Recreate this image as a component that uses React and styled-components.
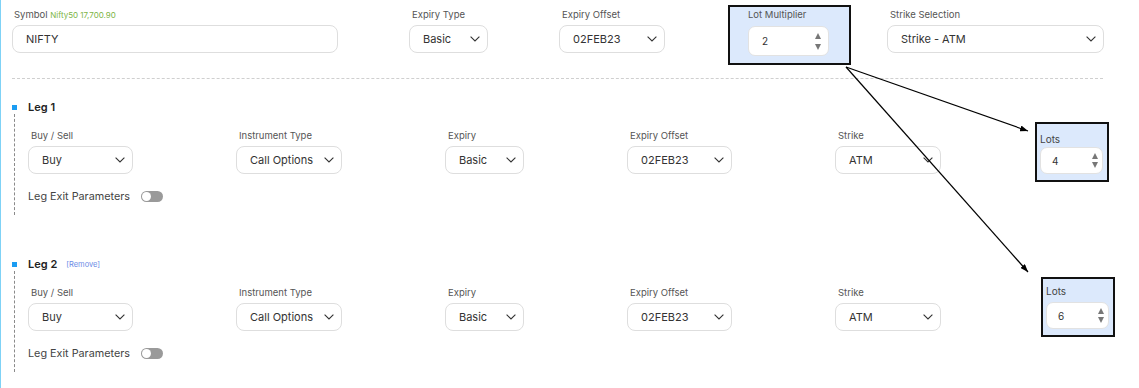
import React from "react";
import styled, { createGlobalStyle } from "styled-components";

const GlobalStyle = createGlobalStyle`
  * { box-sizing: border-box; }
  html, body { margin: 0; padding: 0; background: #ffffff; }
  body { font-family: Inter, "Liberation Sans", Arial, sans-serif; color: #333; }
`;

const Page = styled.div`
  position: relative;
  width: 1139px;
  min-height: 388px;
  border-left: 1px solid #7fd2f6;
  padding-left: 11px;
  overflow: hidden;
`;

const TopRow = styled.div`
  display: flex;
  align-items: flex-start;
  padding-top: 9px;
`;

const Field = styled.div`
  display: flex;
  flex-direction: column;
  width: ${(p) => p.$w}px;
  margin-left: ${(p) => p.$ml || 0}px;
`;

const Label = styled.div`
  font-size: 9.5px;
  line-height: 12px;
  height: 12px;
  color: #555;
  padding-left: ${(p) => (p.$pl != null ? p.$pl : 3)}px;
  margin-bottom: ${(p) => (p.$gap != null ? p.$gap : 4)}px;
  white-space: nowrap;
`;

const Quote = styled.span`
  font-size: 8px;
  color: #7cb445;
`;

const TextBox = styled.div`
  height: 28px;
  border: 1px solid #dedede;
  border-radius: 8px;
  background: #fff;
  display: flex;
  align-items: center;
  padding-left: 13px;
  font-size: 11px;
  color: #333;
`;

const SelectBox = styled.div`
  height: 28px;
  border: 1px solid #dedede;
  border-radius: 8px;
  background: #fff;
  display: flex;
  align-items: center;
  justify-content: space-between;
  padding: 0 7px 0 13px;
  font-size: 11px;
  color: #333;
  white-space: nowrap;
`;

const Chevron = () => (
  <svg width="10" height="6" viewBox="0 0 10 6">
    <polyline points="0.6,0.6 5,5 9.4,0.6" fill="none" stroke="#333" strokeWidth="1.1" />
  </svg>
);

const Select = ({ value }) => (
  <SelectBox>
    <span>{value}</span>
    <Chevron />
  </SelectBox>
);

const Callout = styled.div`
  flex: none;
  width: ${(p) => p.$w}px;
  height: 60px;
  border: 2px solid #111;
  background: #dce9fc;
  margin-top: ${(p) => p.$mt}px;
  margin-left: ${(p) => p.$ml}px;
  padding: ${(p) => p.$pt}px ${(p) => p.$pr}px 0 ${(p) => p.$pl}px;
`;

const CalloutLabel = styled.div`
  font-size: ${(p) => p.$fs || 9.5}px;
  line-height: 12px;
  height: 12px;
  color: ${(p) => p.$c || "#555"};
  margin-bottom: ${(p) => p.$gap}px;
  white-space: nowrap;
`;

const SpinBox = styled.div`
  height: ${(p) => p.$h}px;
  border: 1px solid #e2e2e2;
  border-radius: 7px;
  background: #fff;
  display: flex;
  align-items: center;
  justify-content: space-between;
  padding: 0 ${(p) => p.$pr}px 0 ${(p) => p.$pl}px;
  font-size: 10px;
  color: #333;
`;

const Spinner = styled.div`
  display: flex;
  flex-direction: column;
  gap: ${(p) => p.$gap}px;
`;

const Tri = styled.span`
  width: 0;
  height: 0;
  border-left: 3.5px solid transparent;
  border-right: 3.5px solid transparent;
  ${(p) => (p.$down ? "border-top: 6px solid #777;" : "border-bottom: 6px solid #777;")}
`;

const Spin = ({ value, h, pl, pr, gap }) => (
  <SpinBox $h={h} $pl={pl} $pr={pr}>
    <span>{value}</span>
    <Spinner $gap={gap}>
      <Tri />
      <Tri $down />
    </Spinner>
  </SpinBox>
);

const Divider = styled.div`
  width: 1091px;
  margin-top: 13px;
  border-top: 1px dashed #cfcfcf;
`;

const Leg = styled.section`
  margin-top: ${(p) => p.$mt}px;
`;

const LegHeader = styled.div`
  display: flex;
  align-items: center;
  height: 14px;
`;

const Bullet = styled.span`
  width: 5px;
  height: 5px;
  background: #1b9cf2;
  margin-right: 11px;
`;

const LegTitle = styled.span`
  font-size: 11px;
  font-weight: 600;
  color: #222;
`;

const RemoveLink = styled.span`
  font-size: 7.5px;
  color: #6b8be6;
  margin-left: 9px;
`;

const LegBody = styled.div`
  margin-left: 2px;
  border-left: 1px dashed #8a8a8a;
  padding: 16px 0 12px 13px;
`;

const LegRow = styled.div`
  display: flex;
  align-items: flex-start;
  height: 44px;
`;

const LegFields = styled.div`
  display: flex;
  gap: 103px;
`;

const ExitRow = styled.div`
  display: flex;
  align-items: center;
  height: 14px;
  margin-top: 15px;
  gap: 11px;
  font-size: 10.8px;
  color: #444;
`;

const Toggle = styled.span`
  position: relative;
  width: 22px;
  height: 11px;
  border-radius: 6px;
  background: #9a9a9a;
  &::after {
    content: "";
    position: absolute;
    left: 1px;
    top: 1px;
    width: 9px;
    height: 9px;
    border-radius: 50%;
    background: #fff;
  }
`;

const Arrows = styled.svg`
  position: absolute;
  left: -1px;
  top: 0;
  pointer-events: none;
`;

const legFields = [
  { label: "Buy / Sell", value: "Buy", w: 105 },
  { label: "Instrument Type", value: "Call Options", w: 106 },
  { label: "Expiry", value: "Basic", w: 79 },
  { label: "Expiry Offset", value: "02FEB23", w: 105 },
  { label: "Strike", value: "ATM", w: 106 },
];

const LegBlock = ({ n, mt, removable, lots, lotsMl, lotsMt, lotsPt, lotsGap }) => (
  <Leg $mt={mt}>
    <LegHeader>
      <Bullet />
      <LegTitle>Leg {n}</LegTitle>
      {removable && <RemoveLink>[Remove]</RemoveLink>}
    </LegHeader>
    <LegBody>
      <LegRow>
        <LegFields>
          {legFields.map((f) => (
            <Field key={f.label} $w={f.w}>
              <Label>{f.label}</Label>
              <Select value={f.value} />
            </Field>
          ))}
        </LegFields>
        <Callout $w={74} $mt={lotsMt} $ml={lotsMl} $pt={lotsPt} $pl={3} $pr={4}>
          <CalloutLabel $gap={lotsGap} $fs={10} $c="#444">Lots</CalloutLabel>
          <Spin value={lots} h={27} pl={11} pr={4} gap={3} />
        </Callout>
      </LegRow>
      <ExitRow>
        <span>Leg Exit Parameters</span>
        <Toggle />
      </ExitRow>
    </LegBody>
  </Leg>
);

export default function App() {
  return (
    <>
      <GlobalStyle />
      <Page>
        <TopRow>
          <Field $w={326}>
            <Label $pl={2}>
              Symbol <Quote>Nifty50 17,700.90</Quote>
            </Label>
            <TextBox>NIFTY</TextBox>
          </Field>
          <Field $w={79} $ml={71}>
            <Label>Expiry Type</Label>
            <Select value="Basic" />
          </Field>
          <Field $w={106} $ml={71}>
            <Label>Expiry Offset</Label>
            <Select value="02FEB23" />
          </Field>
          <Callout $w={123} $mt={-4} $ml={63} $pt={2} $pl={18} $pr={20}>
            <CalloutLabel $gap={5}>Lot Multiplier</CalloutLabel>
            <Spin value="2" h={30} pl={13} pr={7} gap={5} />
          </Callout>
          <Field $w={217} $ml={36}>
            <Label>Strike Selection</Label>
            <Select value="Strike - ATM" />
          </Field>
        </TopRow>
        <Divider />
        <LegBlock n={1} mt={21} lots="4" lotsMl={94} lotsMt={-8} lotsPt={9} lotsGap={2} />
        <LegBlock n={2} mt={42} removable lots="6" lotsMl={100} lotsMt={-10} lotsPt={6} lotsGap={5} />
        <Arrows width="1139" height="388" viewBox="0 0 1139 388">
          <defs>
            <marker id="head" markerWidth="8" markerHeight="6" refX="8" refY="3" orient="auto" markerUnits="userSpaceOnUse">
              <path d="M0,0 L8,3 L0,6 z" fill="#000" />
            </marker>
          </defs>
          <line x1="846" y1="67" x2="1028" y2="131" stroke="#000" strokeWidth="1.2" markerEnd="url(#head)" />
          <line x1="846" y1="67" x2="1028" y2="272" stroke="#000" strokeWidth="1.2" markerEnd="url(#head)" />
        </Arrows>
      </Page>
    </>
  );
}
